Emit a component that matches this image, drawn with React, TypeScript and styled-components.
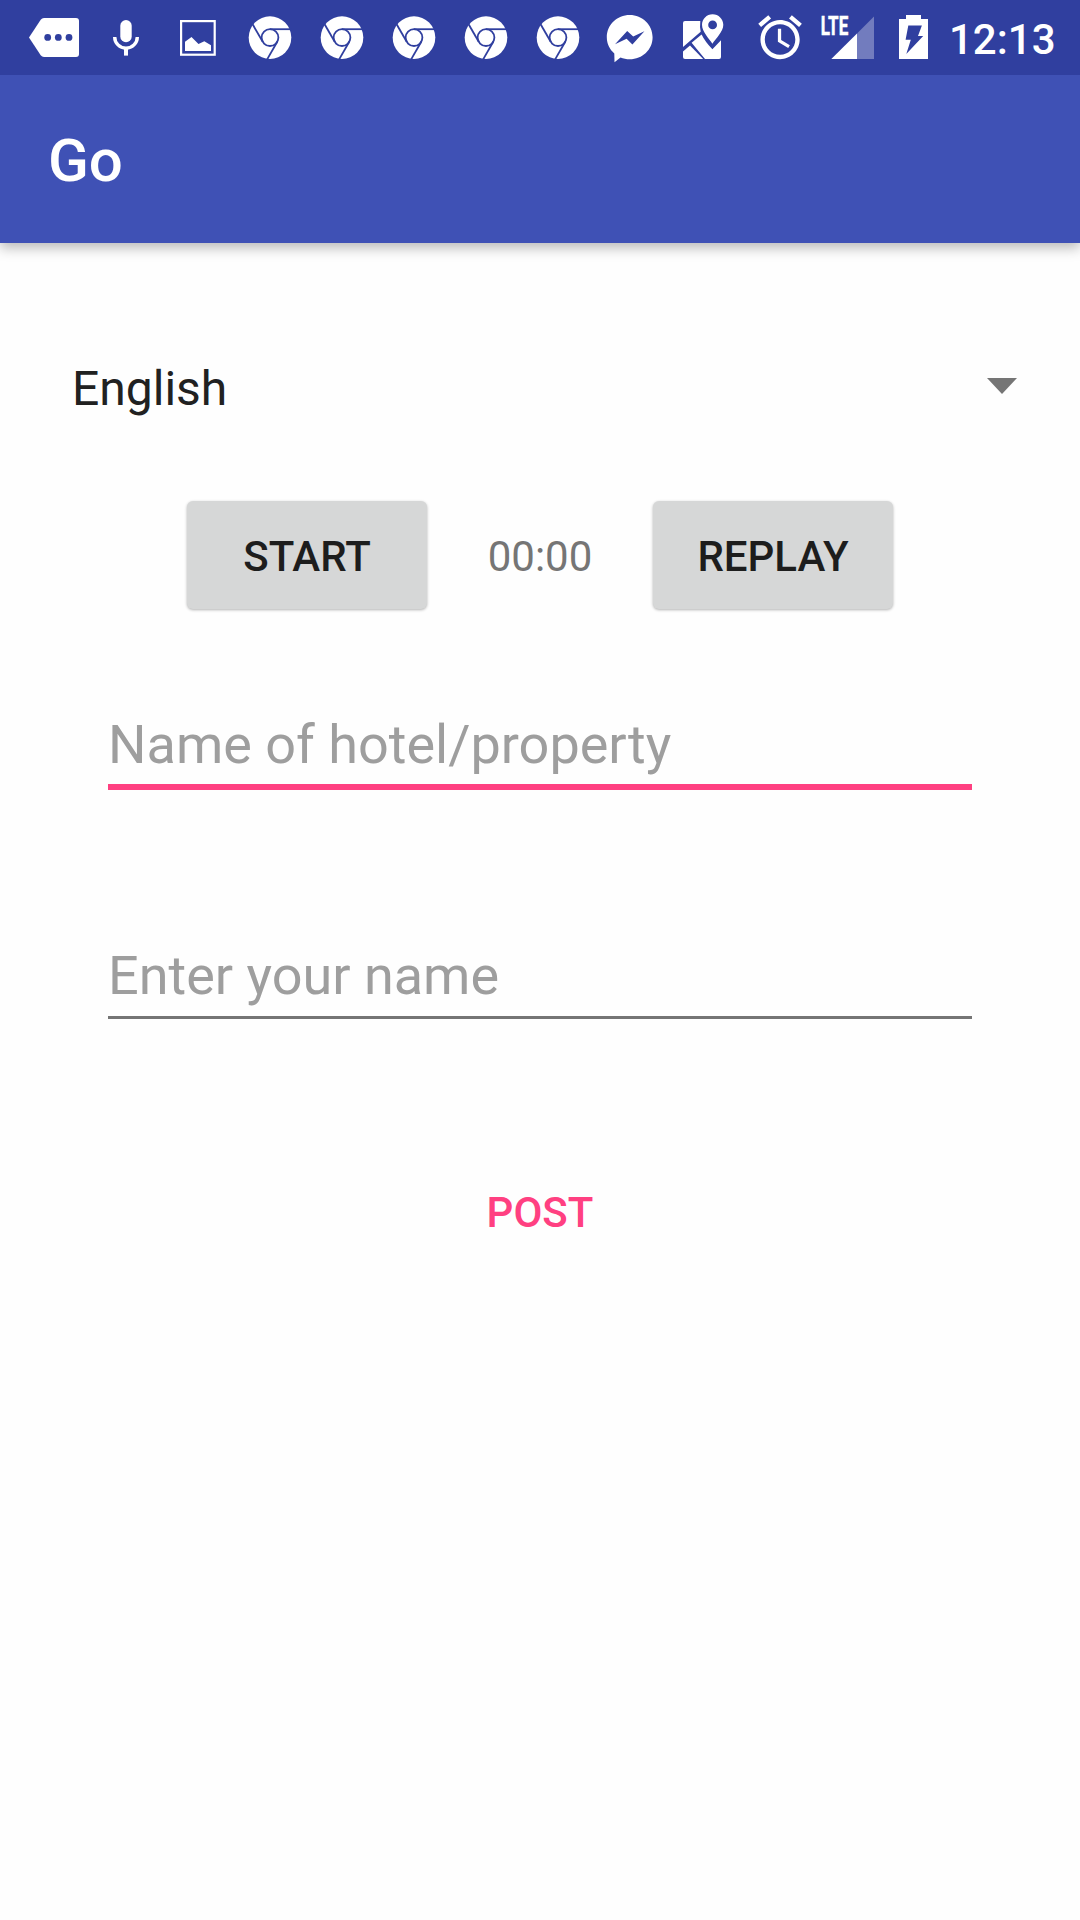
import React from "react";
import styled, { createGlobalStyle } from "styled-components";

const STATUS_BLUE = "#303f9f";

const GlobalStyle = createGlobalStyle`
  *, *::before, *::after { box-sizing: border-box; }
  html, body { margin: 0; padding: 0; background: #fefefe; }
  body { font-family: Roboto, "Noto Sans", sans-serif; overflow: hidden; }
`;

const Screen = styled.div`
  width: 1080px;
  height: 1920px;
  display: flex;
  flex-direction: column;
  background: #fefefe;
  overflow: hidden;
`;

const StatusBar = styled.header`
  position: relative;
  z-index: 1;
  flex: none;
  height: 75px;
  padding-left: 18px;
  display: flex;
  align-items: stretch;
  background: ${STATUS_BLUE};
  color: #fff;
`;

const StatusIcon = styled.svg<{ $width?: number }>`
  flex: none;
  display: block;
  width: ${(p) => p.$width ?? 72}px;
  height: 75px;
  fill: #fff;
`;

const Clock = styled.time`
  padding: 3px 0 0 9px;
  font-size: 42px;
  font-weight: 500;
  line-height: 74px;
  white-space: nowrap;
`;

const AppBar = styled.div`
  flex: none;
  height: 168px;
  padding: 4px 48px 0;
  display: flex;
  align-items: center;
  background: #3f51b5;
  box-shadow: 0 5px 12px rgba(0, 0, 0, 0.27);
`;

const Title = styled.h1`
  margin: 0;
  color: #fff;
  font-size: 60px;
  font-weight: 500;
  line-height: 72px;
`;

const Form = styled.main`
  display: flex;
  flex-direction: column;
  align-items: stretch;
  padding-top: 108px;
`;

const Spinner = styled.div`
  height: 72px;
  padding: 0 63px 0 72px;
  display: flex;
  align-items: center;
  justify-content: space-between;
  color: #212121;
  font-size: 48px;
  line-height: 72px;
`;

const SpinnerValue = styled.span`
  padding-top: 4px;
`;

const Caret = styled.svg`
  display: block;
  width: 30px;
  height: 16px;
  margin-bottom: 3px;
  fill: #757575;
`;

const Controls = styled.div`
  margin-top: 78px;
  display: flex;
  justify-content: center;
  align-items: center;
`;

const RaisedButton = styled.button`
  width: 240px;
  height: 108px;
  padding: 3px 0 0;
  border: 0;
  border-radius: 6px;
  background: #d6d7d7;
  box-shadow: 0 1px 3px rgba(0, 0, 0, 0.3);
  color: #1d1d1d;
  font: 500 42px/50px Roboto, "Noto Sans", sans-serif;
`;

const Timer = styled.span`
  width: 226px;
  padding-top: 3px;
  color: #757575;
  font-size: 42px;
  line-height: 50px;
  text-align: center;
`;

const Field = styled.input<{ $active?: boolean; $gap: number }>`
  display: block;
  height: 90px;
  margin: ${(p) => p.$gap}px 108px 0;
  padding: ${(p) => (p.$active ? 4 : 6)}px 0 0;
  border: 0;
  border-bottom: ${(p) => (p.$active ? "6px solid #ff4081" : "3px solid #757575")};
  border-radius: 0;
  outline: 0;
  background: transparent;
  color: #212121;
  font: 400 54px/72px Roboto, "Noto Sans", sans-serif;

  &::placeholder {
    color: #9e9e9e;
    opacity: 1;
  }
`;

const FlatButton = styled.button`
  align-self: center;
  height: 108px;
  margin-top: 140px;
  padding: 0 48px;
  border: 0;
  background: transparent;
  color: #ff4081;
  font: 500 42px/50px Roboto, "Noto Sans", sans-serif;
`;

const MoreIcon = () => (
  <StatusIcon viewBox="0 0 72 75">
    <path d="M26 18H58Q61 18 61 21V54Q61 57 58 57H26Q24 57 22.7 55.2L11 37.5L22.7 19.8Q24 18 26 18Z" />
    <g fill={STATUS_BLUE}>
      <circle cx="29.7" cy="37.4" r="3.4" />
      <circle cx="40.3" cy="37.4" r="3.4" />
      <circle cx="51" cy="37.4" r="3.4" />
    </g>
  </StatusIcon>
);

const MicIcon = () => (
  <StatusIcon viewBox="0 0 72 75">
    <rect x="30.3" y="20" width="11.4" height="22.2" rx="5.7" />
    <path d="M24.7 37A11.3 11.2 0 0 0 47.3 37" fill="none" stroke="#fff" strokeWidth="3.4" />
    <rect x="34" y="48" width="4" height="7.6" />
  </StatusIcon>
);

const PictureIcon = () => (
  <StatusIcon viewBox="0 0 72 75">
    <rect x="19.1" y="21.1" width="33.6" height="33.6" fill="none" stroke="#fff" strokeWidth="2.2" />
    <path d="M23 51V41.8L29.5 37L36.5 44L42.3 41.2L49 45.2V51Z" />
  </StatusIcon>
);

const ChromeIcon = () => (
  <StatusIcon viewBox="0 0 72 75">
    <circle cx="36" cy="37.6" r="21.3" />
    <g fill="none" stroke={STATUS_BLUE} strokeWidth="1.8">
      <circle cx="36" cy="37.6" r="8.4" />
      {[0, 120, 240].map((angle) => (
        <path key={angle} d="M36 29.2H58" transform={`rotate(${angle} 36 37.6)`} />
      ))}
    </g>
  </StatusIcon>
);

const MessengerIcon = () => (
  <StatusIcon viewBox="0 0 72 75">
    <path d="M35.7 15C48.4 15 58.6 24.8 58.6 37.2S48.4 59.2 35.7 59.2C32.4 59.2 29.3 58.6 26.5 57.4L20.5 62.3L20.3 53.4C15.7 49.4 12.8 43.6 12.8 37.2C12.8 24.8 23 15 35.7 15Z" />
    <path d="M21 44.2L33.2 31L39.2 36.4L50.4 31.2L38.4 44.5L32.6 38.8Z" fill={STATUS_BLUE} />
  </StatusIcon>
);

const MapIcon = () => (
  <StatusIcon viewBox="0 0 72 75">
    <path d="M17 23Q17 21 19 21H34.3Q33.6 27 34.7 31.7L17 47Z" />
    <path d="M35.6 34.4Q39 41.5 46.4 49.2L55 40.3V57Q55 59 53 59H39L25.6 42.7Z" />
    <path d="M24 45.4L37.2 59H19Q17 59 17 57V51.6Z" />
    <path
      fillRule="evenodd"
      d="M46.6 14.2C52.6 14.2 57.3 19 57.3 24.8C57.3 32 49.5 38.8 46.4 43.8C43.3 38.8 36 32 36 24.8C36 19 40.6 14.2 46.6 14.2ZM46.6 20.5A4.4 4.4 0 1 0 46.6 29.3A4.4 4.4 0 1 0 46.6 20.5Z"
    />
  </StatusIcon>
);

const AlarmIcon = () => (
  <StatusIcon $width={80} viewBox="0 0 80 75">
    <path
      transform="translate(15.9 11.2) scale(2.18)"
      d="M22 5.72l-4.6-3.86-1.29 1.53 4.6 3.86L22 5.72zM7.88 3.39L6.6 1.86 2 5.71l1.29 1.53 4.59-3.85zM12.5 8H11v6l4.75 2.85.75-1.23-4-2.37V8zM12 4c-4.97 0-9 4.03-9 9s4.02 9 9 9c4.97 0 9-4.03 9-9s-4.03-9-9-9zm0 16c-3.87 0-7-3.13-7-7s3.13-7 7-7 7 3.13 7 7-3.13 7-7 7z"
    />
  </StatusIcon>
);

const SignalIcon = () => (
  <StatusIcon $width={64} viewBox="0 0 64 75">
    <text
      x="2.8"
      y="35"
      fontSize="25"
      fontWeight="700"
      stroke="#fff"
      strokeWidth="0.5"
      textLength="27.4"
      lengthAdjust="spacingAndGlyphs"
    >
      LTE
    </text>
    <path d="M13.3 59L39 33.4V59Z" />
    <path d="M39 33.4L56 16.4V59H39Z" fillOpacity="0.32" />
  </StatusIcon>
);

const BatteryIcon = () => (
  <StatusIcon $width={58} viewBox="0 0 58 75">
    <path d="M24 15H39V19H46V59H17V19H24Z" />
    <path d="M26.3 25.4H39.9L36 36H41.2L24.3 54L28.8 39.7H23.6Z" fill={STATUS_BLUE} />
  </StatusIcon>
);

export default function App() {
  return (
    <Screen>
      <GlobalStyle />
      <StatusBar>
        <MoreIcon />
        <MicIcon />
        <PictureIcon />
        {[0, 1, 2, 3, 4].map((tab) => (
          <ChromeIcon key={tab} />
        ))}
        <MessengerIcon />
        <MapIcon />
        <AlarmIcon />
        <SignalIcon />
        <BatteryIcon />
        <Clock>12:13</Clock>
      </StatusBar>
      <AppBar>
        <Title>Go</Title>
      </AppBar>
      <Form>
        <Spinner>
          <SpinnerValue>English</SpinnerValue>
          <Caret viewBox="0 0 30 16">
            <path d="M0 0H30L15 16Z" />
          </Caret>
        </Spinner>
        <Controls>
          <RaisedButton>START</RaisedButton>
          <Timer>00:00</Timer>
          <RaisedButton>REPLAY</RaisedButton>
        </Controls>
        <Field $active $gap={91} placeholder="Name of hotel/property" />
        <Field $gap={139} placeholder="Enter your name" />
        <FlatButton>POST</FlatButton>
      </Form>
    </Screen>
  );
}
